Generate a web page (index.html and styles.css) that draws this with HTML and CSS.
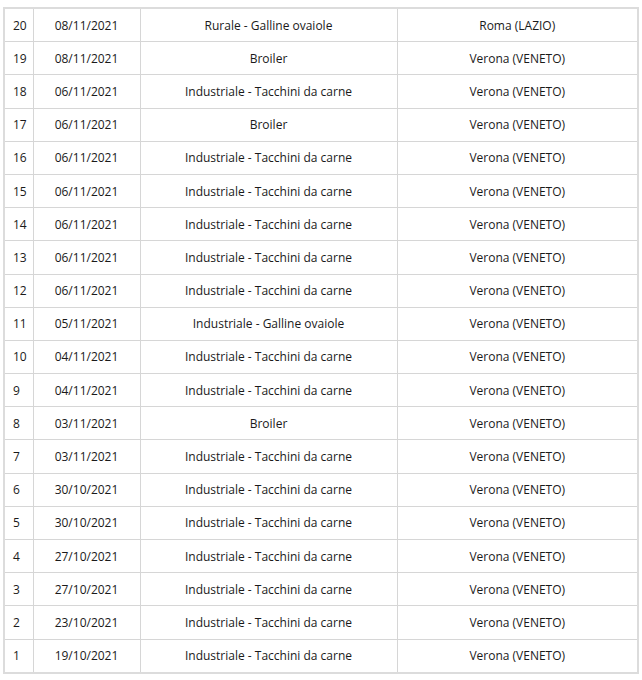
FILE: index.html
```html
<!DOCTYPE html>
<html lang="it">
<head>
<meta charset="utf-8">
<link rel="stylesheet" href="styles.css">
</head>
<body>
<table class="tbl">
<colgroup><col class="c1"><col class="c2"><col class="c3"><col class="c4"></colgroup>
<tbody>
<tr><td class="n">20</td><td>08/11/2021</td><td>Rurale - Galline ovaiole</td><td>Roma (LAZIO)</td></tr>
<tr><td class="n">19</td><td>08/11/2021</td><td>Broiler</td><td>Verona (VENETO)</td></tr>
<tr><td class="n">18</td><td>06/11/2021</td><td>Industriale - Tacchini da carne</td><td>Verona (VENETO)</td></tr>
<tr><td class="n">17</td><td>06/11/2021</td><td>Broiler</td><td>Verona (VENETO)</td></tr>
<tr><td class="n">16</td><td>06/11/2021</td><td>Industriale - Tacchini da carne</td><td>Verona (VENETO)</td></tr>
<tr><td class="n">15</td><td>06/11/2021</td><td>Industriale - Tacchini da carne</td><td>Verona (VENETO)</td></tr>
<tr><td class="n">14</td><td>06/11/2021</td><td>Industriale - Tacchini da carne</td><td>Verona (VENETO)</td></tr>
<tr><td class="n">13</td><td>06/11/2021</td><td>Industriale - Tacchini da carne</td><td>Verona (VENETO)</td></tr>
<tr><td class="n">12</td><td>06/11/2021</td><td>Industriale - Tacchini da carne</td><td>Verona (VENETO)</td></tr>
<tr><td class="n">11</td><td>05/11/2021</td><td>Industriale - Galline ovaiole</td><td>Verona (VENETO)</td></tr>
<tr><td class="n">10</td><td>04/11/2021</td><td>Industriale - Tacchini da carne</td><td>Verona (VENETO)</td></tr>
<tr><td class="n">9</td><td>04/11/2021</td><td>Industriale - Tacchini da carne</td><td>Verona (VENETO)</td></tr>
<tr><td class="n">8</td><td>03/11/2021</td><td>Broiler</td><td>Verona (VENETO)</td></tr>
<tr><td class="n">7</td><td>03/11/2021</td><td>Industriale - Tacchini da carne</td><td>Verona (VENETO)</td></tr>
<tr><td class="n">6</td><td>30/10/2021</td><td>Industriale - Tacchini da carne</td><td>Verona (VENETO)</td></tr>
<tr><td class="n">5</td><td>30/10/2021</td><td>Industriale - Tacchini da carne</td><td>Verona (VENETO)</td></tr>
<tr><td class="n">4</td><td>27/10/2021</td><td>Industriale - Tacchini da carne</td><td>Verona (VENETO)</td></tr>
<tr><td class="n">3</td><td>27/10/2021</td><td>Industriale - Tacchini da carne</td><td>Verona (VENETO)</td></tr>
<tr><td class="n">2</td><td>23/10/2021</td><td>Industriale - Tacchini da carne</td><td>Verona (VENETO)</td></tr>
<tr><td class="n">1</td><td>19/10/2021</td><td>Industriale - Tacchini da carne</td><td>Verona (VENETO)</td></tr>
</tbody>
</table>
</body>
</html>
```
FILE: styles.css
```css
html, body {
  margin: 0;
  background: #ffffff;
}
body {
  padding: 7px 5px 0 3px;
  font-family: "Open Sans", "Liberation Sans", sans-serif;
  font-size: 12px;
  color: #1a1a1a;
}
.tbl {
  border-collapse: collapse;
  table-layout: fixed;
  width: 634px;
  border: 2px solid #dcdcdc;
}
.c1 { width: 29px; }
.c2 { width: 107px; }
.c3 { width: 257px; }
.c4 { width: 241px; }
.tbl td {
  border: 1px solid #d6d6d6;
  height: 32.2px;
  padding: 0;
  text-align: center;
  vertical-align: middle;
  white-space: nowrap;
}
.tbl td.n {
  text-align: left;
  padding-left: 8px;
}
```
